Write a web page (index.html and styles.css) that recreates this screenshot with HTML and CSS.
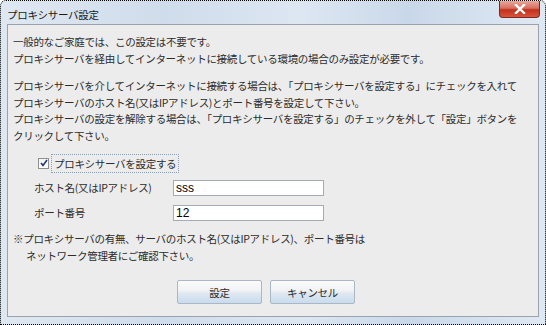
FILE: index.html
```html
<!DOCTYPE html>
<html lang="ja">
    <head>
        <meta charset="utf-8" />
        <title>プロキシサーバ設定</title>
        <link rel="stylesheet" href="styles.css">
    </head>

    <body>
        <div class="window">
            <div class="titlebar">
                <span class="title">プロキシサーバ設定</span>
                <button class="close" type="button">
                    <svg width="12" height="10" viewBox="0 0 12 10">
                        <path d="M2 1 L10 9 M10 1 L2 9" stroke="#fff" stroke-width="2.4" stroke-linecap="square" />
                    </svg>
                </button>
            </div>

            <div class="panel">
                <p class="lead">一般的なご家庭では、この設定は不要です。<br>プロキシサーバを経由してインターネットに接続している環境の場合のみ設定が必要です。</p>
                <p class="lead">プロキシサーバを介してインターネットに接続する場合は、「プロキシサーバを設定する」にチェックを入れて<br>プロキシサーバのホスト名(又はIPアドレス)とポート番号を設定して下さい。<br>プロキシサーバの設定を解除する場合は、「プロキシサーバを設定する」のチェックを外して「設定」ボタンを<br>クリックして下さい。</p>

                <label class="check">
                    <span class="box">
                        <svg width="8" height="8" viewBox="0 0 8 8">
                            <path d="M1 4 L3 6.5 L7 1" fill="none" stroke="#1c3a6e" stroke-width="1.6" />
                        </svg>
                    </span>
                    <span class="check-text">プロキシサーバを設定する</span>
                </label>

                <div class="fields">
                    <span class="field-label">ホスト名(又はIPアドレス)</span>
                    <input type="text" value="sss" />
                    <span class="field-label">ポート番号</span>
                    <input type="text" value="12" />
                </div>

                <p class="note">※プロキシサーバの有無、サーバのホスト名(又はIPアドレス)、ポート番号は<br><span class="indent">ネットワーク管理者にご確認下さい。</span></p>

                <div class="actions">
                    <button type="button" class="btn">設定</button>
                    <button type="button" class="btn">キャンセル</button>
                </div>
            </div>
        </div>
    </body>
</html>
```

FILE: styles.css
```css
html,
body {
    margin: 0;
    padding: 0;
    background: #fff;
    font-family: 'Noto Sans CJK JP', sans-serif;
    font-size: 10.5px;
    color: #2c2c2c;
}

.window {
    box-sizing: border-box;
    width: 546px;
    height: 325px;
    border: 1px dotted #000;
    border-radius: 6px 6px 0 0;
    padding: 0 6px 7px 6px;
    display: flex;
    flex-direction: column;
    background: linear-gradient(90deg, #dfe8f1 0%, #cfdceb 30%, #dde7f2 55%, #c9d8e9 75%, #dfe9f3 100%);
}

.titlebar {
    height: 23px;
    display: flex;
    align-items: center;
    justify-content: space-between;
}

.title {
    font-size: 10.5px;
    letter-spacing: -0.3px;
    color: #1a1a1a;
    margin-top: 3px;
}

.close {
    align-self: flex-start;
    width: 41px;
    height: 17px;
    margin-right: -1px;
    padding: 0;
    border: 1px solid #7a2a22;
    border-top: none;
    border-radius: 0 0 4px 4px;
    background: linear-gradient(180deg, #e9a89c 0%, #d6705f 45%, #c2301c 55%, #d9533b 100%);
    display: flex;
    align-items: center;
    justify-content: center;
}

.panel {
    flex: 1;
    border: 1px solid #9aa3ad;
    background: #ececec;
    padding: 9px 5px 0 5px;
    letter-spacing: -0.3px;
}

.lead {
    margin: 0 0 11px;
    line-height: 16.5px;
}

.check {
    display: flex;
    align-items: center;
    margin: 9px 0 0 25px;
    height: 16px;
}

.box {
    box-sizing: border-box;
    width: 11px;
    height: 11px;
    border: 1px solid #8f8f8f;
    background: linear-gradient(180deg, #f4f4f4, #fff);
    display: flex;
    align-items: center;
    justify-content: center;
}

.check-text {
    margin-left: 2px;
    padding: 1px 2px;
    border: 1px dotted #8aa0b8;
}

.fields {
    display: grid;
    grid-template-columns: 139px 151px;
    row-gap: 9px;
    align-items: center;
    margin: 9px 0 0 21px;
}

.field-label {
    line-height: 16px;
}

input {
    box-sizing: border-box;
    height: 16px;
    width: 151px;
    margin: 0;
    padding: 0 2px;
    border: 1px solid #a5abb6;
    background: #fff;
    font-family: 'Liberation Sans', sans-serif;
    font-size: 12px;
    color: #000;
}

.note {
    margin: 10px 0 0;
    line-height: 16.5px;
}

.indent {
    padding-left: 13px;
}

.actions {
    display: flex;
    gap: 8px;
    margin: 16px 0 0 164px;
}

.btn {
    width: 85px;
    height: 24px;
    padding: 0;
    border: 1px solid #a9b7c6;
    border-radius: 2px;
    background: linear-gradient(180deg, #fbfbfb 0%, #f0f2f4 45%, #dfe8f1 55%, #c9dcee 100%);
    font-family: 'Noto Sans CJK JP', sans-serif;
    font-size: 10.5px;
    letter-spacing: -0.3px;
    color: #2c2c2c;
}
```
